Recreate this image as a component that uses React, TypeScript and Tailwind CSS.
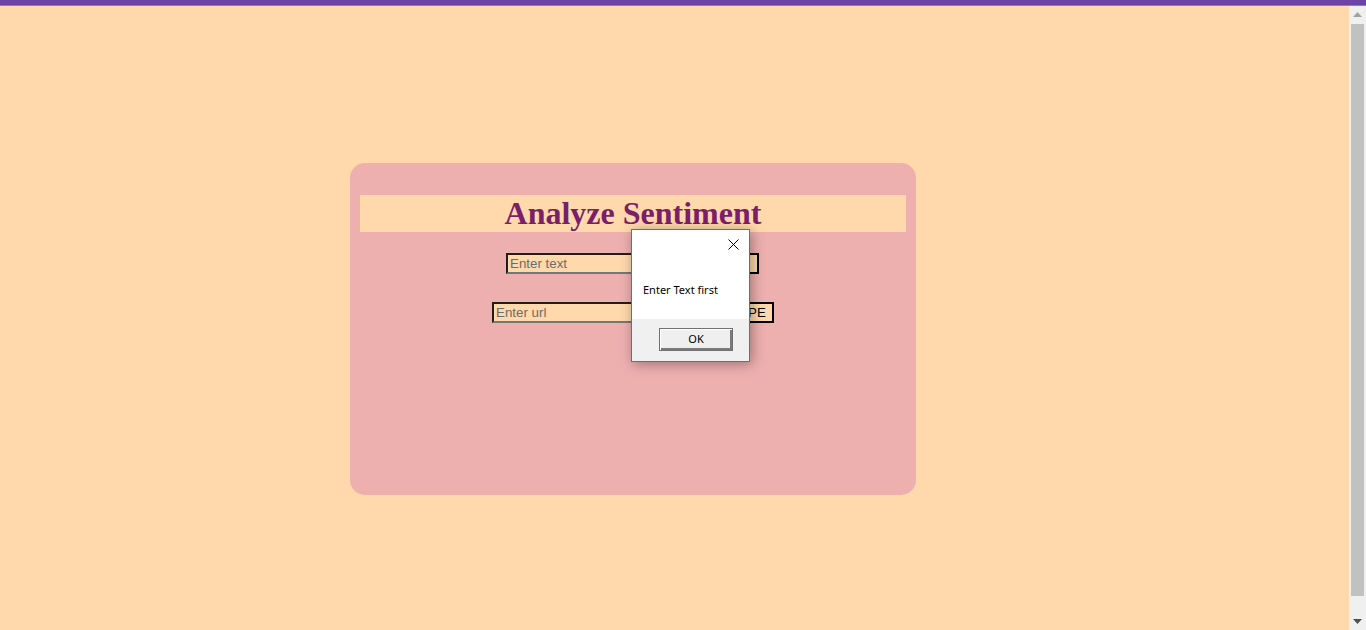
// Sentiment page with the "Enter Text first" alert open over it

function Scrollbar() {
  return (
    <div className="w-[17px] bg-[#f0f0f0] flex flex-col">
      <div className="h-[17px] flex items-center justify-center">
        <svg width="9" height="5" viewBox="0 0 9 5">
          <path d="M0 5 L4.5 0 L9 5 Z" fill="#a3a3a3" />
        </svg>
      </div>
      <div className="mt-[1px] mx-[2px] h-[572px] bg-[#c1c1c1]" />
      <div className="flex-1" />
      <div className="h-[17px] flex items-center justify-center">
        <svg width="9" height="5" viewBox="0 0 9 5">
          <path d="M0 0 L9 0 L4.5 5 Z" fill="#505050" />
        </svg>
      </div>
    </div>
  )
}

function AlertBox() {
  return (
    <div
      className="absolute left-[631px] top-[229px] w-[119px] h-[133px] bg-white border border-[#6e6e6e] shadow-[2px_2px_12px_rgba(0,0,0,0.35)] flex flex-col"
      style={{ fontFamily: '"Noto Sans", "Open Sans", sans-serif' }}
    >
      <div className="h-[89px] flex flex-col">
        <div className="flex justify-end pr-[10px] pt-[9px]">
          <svg width="11" height="11" viewBox="0 0 11 11">
            <path d="M0.5 0.5 L10.5 10.5 M10.5 0.5 L0.5 10.5" stroke="#000" strokeWidth="1" />
          </svg>
        </div>
        <p className="mt-[32px] pl-[11px] text-[11px] leading-[16px] text-black">Enter Text first</p>
      </div>
      <div className="flex-1 bg-[#f0f0f0]">
        <button className="ml-[27px] mt-[9px] w-[74px] h-[23px] bg-[#efefef] border border-[#707070] shadow-[inset_1px_1px_0_#ffffff,inset_-2px_-2px_0_#7a7a7a] text-[11px] text-black flex items-center justify-center">
          OK
        </button>
      </div>
    </div>
  )
}

export default function App() {
  const inputCls =
    'h-[21px] px-[2px] bg-[#ffd9ab] border-2 border-t-[#1e1e1e] border-l-[#1e1e1e] border-b-[#767676] border-r-[#767676] text-[13.33px] text-black placeholder:text-[#6b6b6b] outline-none'
  const buttonCls =
    'h-[21px] px-[6px] bg-[#ffd9ab] border-2 border-black text-[13.33px] text-black flex items-center justify-center'

  return (
    <div
      className="relative w-[1366px] h-[630px] overflow-hidden flex flex-col bg-[#ffd9ab]"
      style={{ fontFamily: '"Liberation Sans", Arial, sans-serif' }}
    >
      <div className="h-[5px] bg-[#6c42a5]" />
      <div className="h-[1px] bg-[#9a72c4]" />
      <div className="flex flex-1">
        <main className="flex-1">
          <div className="ml-[350px] mt-[157px] w-[566px] h-[332px] rounded-[15px] bg-[#eeafaf] p-[10px]">
            <h1
              className="my-[22px] h-[37px] bg-[#ffd9ab] text-center text-[32px] leading-[37px] font-bold text-[#7b1e6b]"
              style={{ fontFamily: '"Liberation Serif", "Times New Roman", serif' }}
            >
              Analyze Sentiment
            </h1>
            <div className="flex justify-center pr-[1px] -mt-[1px]">
              <input className={`${inputCls} w-[176px]`} placeholder="Enter text" />
              <button className={`${buttonCls} w-[77px]`}>ANALYZE</button>
            </div>
            <div className="flex justify-center mt-[28px]">
              <input className={`${inputCls} w-[211px]`} placeholder="Enter url" />
              <button className={`${buttonCls} w-[71px]`}>SCRAPE</button>
            </div>
          </div>
        </main>
        <Scrollbar />
      </div>
      <AlertBox />
    </div>
  )
}
